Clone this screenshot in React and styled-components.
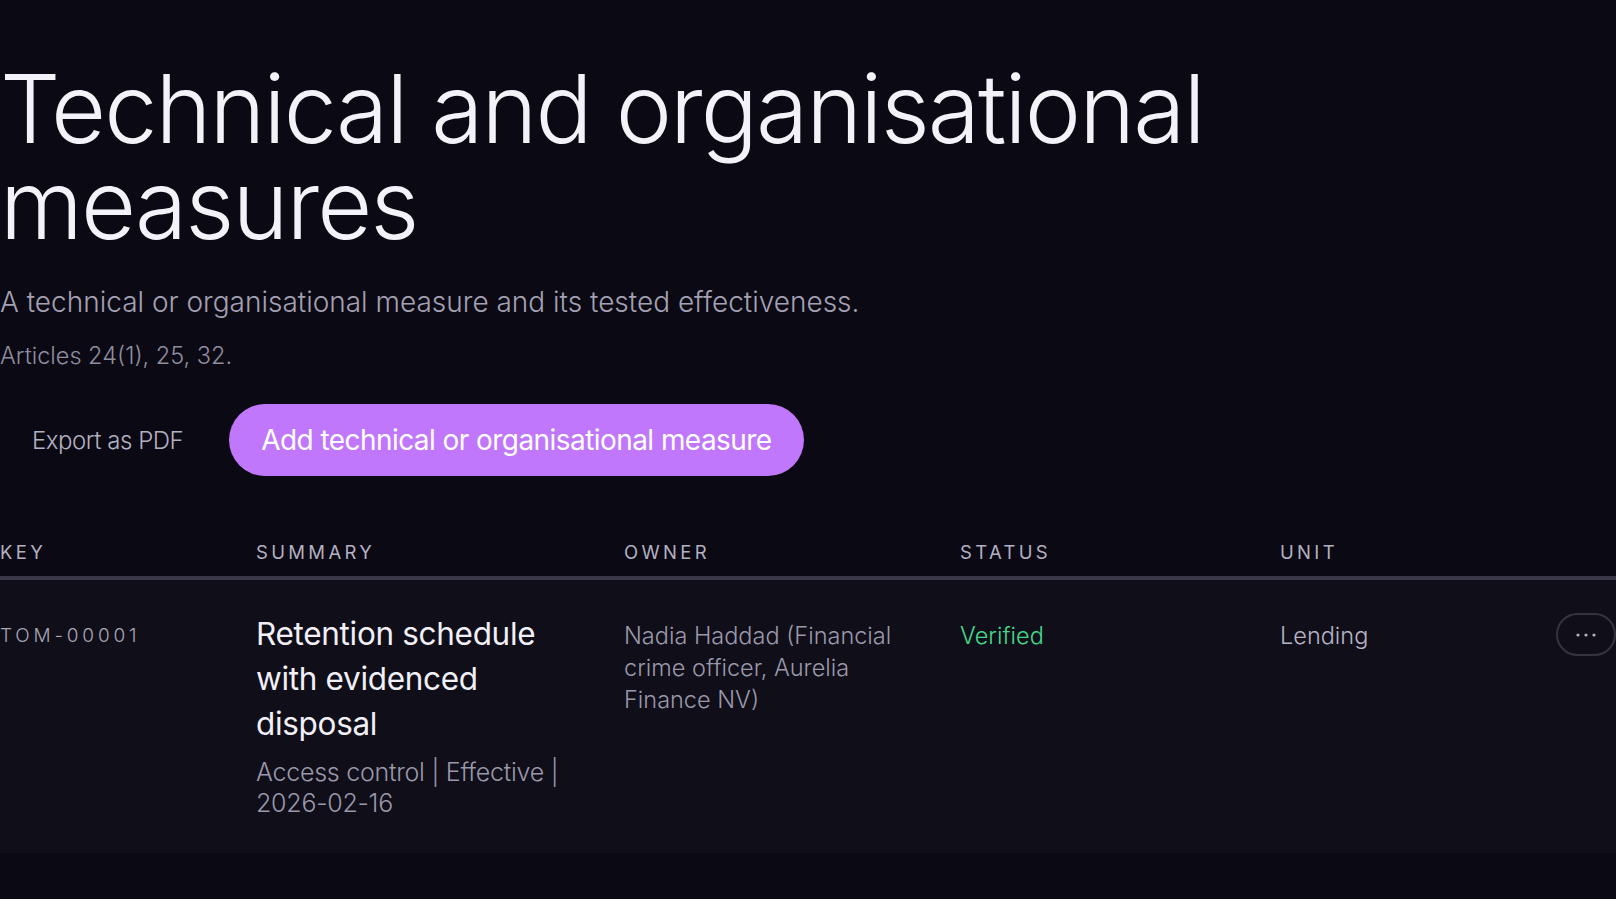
import React from 'react'
import styled, { createGlobalStyle } from 'styled-components'

const GlobalStyle = createGlobalStyle`
  html, body {
    margin: 0;
    padding: 0;
    background: #0b0913;
    overflow: hidden;
  }
  body {
    font-family: Inter, "Noto Sans", sans-serif;
    color: #f3f2f8;
  }
`

const Page = styled.main`
  width: 1616px;
  min-height: 899px;
  padding-top: 61px;
  box-sizing: border-box;
`

const Title = styled.h1`
  margin: 0;
  font-size: 95px;
  line-height: 96px;
  font-weight: 300;
  letter-spacing: -0.02em;
  color: #f3f2f8;
  max-width: 1300px;
`

const Lead = styled.p`
  margin: 32px 0 0;
  font-size: 28px;
  font-weight: 300;
  color: #a3a1b3;
`

const Refs = styled.p`
  margin: 22px 0 0;
  font-size: 23.5px;
  font-weight: 300;
  color: #8f8d9f;
`

const Actions = styled.div`
  display: flex;
  align-items: center;
  gap: 14px;
  margin-top: 34px;
`

const Button = styled.button`
  height: 72px;
  padding: 0 32px;
  border: none;
  border-radius: 36px;
  font-family: inherit;
  font-size: ${(p) => (p.$primary ? '28px' : '24px')};
  font-weight: ${(p) => (p.$primary ? 400 : 300)};
  letter-spacing: -0.02em;
  cursor: pointer;
  background: ${(p) => (p.$primary ? '#c077fb' : 'transparent')};
  color: ${(p) => (p.$primary ? '#ffffff' : '#b3b1c2')};
`

const Table = styled.div`
  margin-top: 65px;
  width: 1616px;
`

const columns = '256px 368px 336px 320px 276px 60px'

const HeadRow = styled.div`
  display: grid;
  grid-template-columns: ${columns};
  border-bottom: 4px solid #3a3848;
  padding-bottom: 13px;
`

const HeadCell = styled.div`
  font-size: 18.5px;
  font-weight: 400;
  letter-spacing: 0.18em;
  text-transform: uppercase;
  color: #b3b1c2;
`

const BodyRow = styled.div`
  display: grid;
  grid-template-columns: ${columns};
  background: #100e19;
  padding: 40px 0 34px;
`

const Cell = styled.div`
  padding-right: ${(p) => p.$gutter || '32px'};
  font-size: 23.5px;
  line-height: 32px;
  font-weight: 300;
  color: ${(p) => p.$color || '#9a98aa'};
`

const Key = styled.div`
  font-size: 19px;
  line-height: 32px;
  letter-spacing: 0.2em;
  color: #a9a7b8;
`

const Summary = styled.div`
  font-size: 31.5px;
  line-height: 45px;
  font-weight: 400;
  letter-spacing: -0.01em;
  color: #f1f0f6;
  margin-top: -9px;
`

const Meta = styled.div`
  margin-top: 11px;
  font-size: 25px;
  line-height: 31px;
  font-weight: 300;
  letter-spacing: -0.01em;
  color: #9a98aa;
`

const MoreButton = styled.button`
  width: 60px;
  height: 43px;
  margin-top: -7px;
  border: 2px solid #35333f;
  border-radius: 22px;
  background: transparent;
  color: #b3b1c2;
  display: flex;
  align-items: center;
  justify-content: center;
  padding: 0;
  cursor: pointer;
`

function Dots() {
  return (
    <svg width="20" height="4" viewBox="0 0 20 4">
      <circle cx="2" cy="2" r="1.6" fill="currentColor" />
      <circle cx="10" cy="2" r="1.6" fill="currentColor" />
      <circle cx="18" cy="2" r="1.6" fill="currentColor" />
    </svg>
  )
}

export default function App() {
  return (
    <>
      <GlobalStyle />
      <Page>
        <Title>Technical and organisational measures</Title>
        <Lead>A technical or organisational measure and its tested effectiveness.</Lead>
        <Refs>Articles 24(1), 25, 32.</Refs>
        <Actions>
          <Button>Export as PDF</Button>
          <Button $primary>Add technical or organisational measure</Button>
        </Actions>
        <Table>
          <HeadRow>
            <HeadCell>Key</HeadCell>
            <HeadCell>Summary</HeadCell>
            <HeadCell>Owner</HeadCell>
            <HeadCell>Status</HeadCell>
            <HeadCell>Unit</HeadCell>
            <HeadCell />
          </HeadRow>
          <BodyRow>
            <Cell>
              <Key>TOM-00001</Key>
            </Cell>
            <Cell $gutter="48px">
              <Summary>Retention schedule with evidenced disposal</Summary>
              <Meta>Access control | Effective | 2026-02-16</Meta>
            </Cell>
            <Cell>Nadia Haddad (Financial crime officer, Aurelia Finance NV)</Cell>
            <Cell $color="#45d88a">Verified</Cell>
            <Cell $color="#b6b4c4">Lending</Cell>
            <Cell $gutter="0">
              <MoreButton aria-label="More actions">
                <Dots />
              </MoreButton>
            </Cell>
          </BodyRow>
        </Table>
      </Page>
    </>
  )
}
